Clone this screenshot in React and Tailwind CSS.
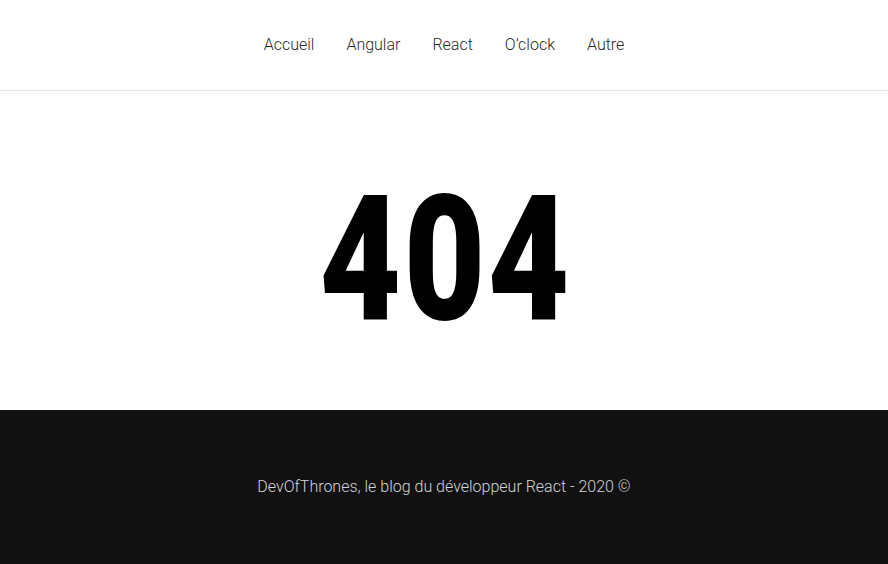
export default function App() {
  const links = ['Accueil', 'Angular', 'React', 'O’clock', 'Autre'];

  return (
    <div className="min-h-[564px] flex flex-col bg-white" style={{ fontFamily: 'Roboto, "Liberation Sans", sans-serif' }}>
      <header className="h-[91px] border-b border-[#e2e2e2] flex items-center justify-center">
        <nav className="flex items-center gap-8 text-base font-light text-[#2a2a2a]">
          {links.map((l) => (
            <a key={l} href="#" className="leading-none">
              {l}
            </a>
          ))}
        </nav>
      </header>

      <main className="h-[319px] flex items-center justify-center">
        <h1 className="text-[174px] font-black leading-none text-black scale-x-[0.81] tracking-[3px] mt-[19px] ml-[4px]">
          404
        </h1>
      </main>

      <footer className="flex-1 bg-[#111111] flex items-center justify-center">
        <p className="text-base font-light text-[#d4d4d4]">
          DevOfThrones, le blog du développeur React - 2020 ©
        </p>
      </footer>
    </div>
  );
}
